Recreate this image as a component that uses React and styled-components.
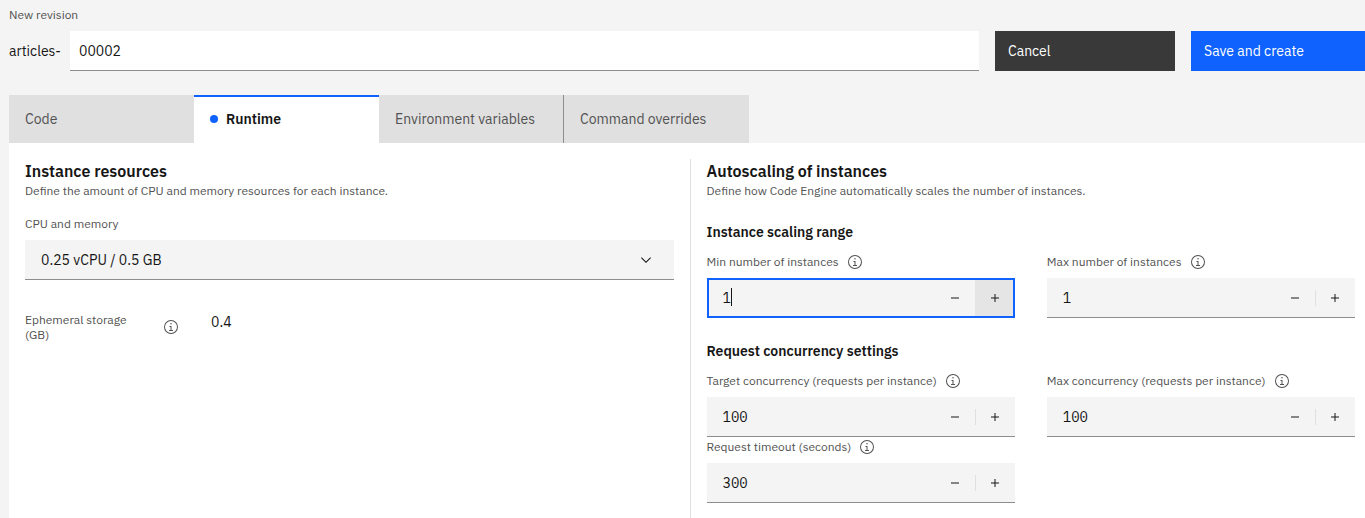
import React, { useState } from "react";
import styled, { createGlobalStyle } from "styled-components";

const sans = `"IBM Plex Sans", Inter, "Noto Sans", sans-serif`;
const mono = `"IBM Plex Mono", "Liberation Mono", monospace`;

const GlobalStyle = createGlobalStyle`
  *, *::before, *::after { box-sizing: border-box; }
  body {
    margin: 0;
    background: #f4f4f4;
    color: #161616;
    font-family: ${sans};
    font-size: 14px;
    line-height: 20px;
  }
  button, input, select { font: inherit; color: inherit; margin: 0; border: 0; border-radius: 0; }
`;

const Page = styled.main`
  display: flex;
  flex-direction: column;
  min-height: 100vh;
  padding: 7px 0 0 9px;
`;

const Header = styled.form`
  display: flex;
  flex-direction: column;
  gap: 8px;
  margin-bottom: 24px;
`;

const Label = styled.label`
  font-size: 12px;
  line-height: 16px;
  color: #525252;
`;

const HeaderRow = styled.div`
  display: flex;
  align-items: center;
  gap: 16px;
`;

const NameField = styled.div`
  flex: 1;
  display: flex;
  align-items: center;
`;

const Prefix = styled.span`
  width: 61px;
`;

const NameInput = styled.input`
  flex: 1;
  min-width: 0;
  height: 40px;
  padding: 0 9px;
  background: #fff;
  border-bottom: 1px solid #8d8d8d;
`;

const ActionButton = styled.button`
  width: ${(p) => (p.$primary ? 174 : 180)}px;
  height: 40px;
  padding: 0 13px;
  text-align: left;
  color: #fff;
  background: ${(p) => (p.$primary ? "#0f62fe" : "#393939")};
  cursor: pointer;
`;

const TabList = styled.div`
  display: flex;
`;

const Tab = styled.button`
  display: flex;
  align-items: center;
  gap: 8px;
  width: 185px;
  height: 48px;
  padding: 0 0 0 16px;
  white-space: nowrap;
  color: ${(p) => (p.$active ? "#161616" : "#525252")};
  font-weight: ${(p) => (p.$active ? 600 : 400)};
  background: ${(p) => (p.$active ? "#fff" : "#e0e0e0")};
  box-shadow: ${(p) =>
    p.$active ? "inset 0 2px 0 #0f62fe" : p.$divided ? "inset -1px 0 0 #8d8d8d" : "none"};
  cursor: pointer;
`;

const Dot = styled.span`
  width: 8px;
  height: 8px;
  border-radius: 50%;
  background: #0f62fe;
`;

const Panel = styled.section`
  flex: 1;
  display: flex;
  gap: 16px;
  padding: 16px 10px 0 16px;
  background: #fff;
`;

const Column = styled.div`
  flex: 1 1 0;
  min-width: 0;
`;

const Divider = styled.div`
  width: 1px;
  background: #e0e0e0;
`;

const Title = styled.h2`
  margin: 0;
  font-size: 16px;
  line-height: 24px;
  font-weight: 600;
`;

const Description = styled.p`
  margin: 0;
  font-size: 12px;
  line-height: 16px;
  color: #525252;
`;

const SelectField = styled.div`
  display: flex;
  flex-direction: column;
  gap: 8px;
  margin-top: 17px;
`;

const SelectBox = styled.div`
  position: relative;
  display: flex;

  svg {
    position: absolute;
    right: 20px;
    top: 12px;
    pointer-events: none;
  }
`;

const Select = styled.select`
  appearance: none;
  flex: 1;
  height: 40px;
  padding: 0 48px 0 16px;
  background: #f4f4f4;
  border-bottom: 1px solid #8d8d8d;
`;

const Storage = styled.div`
  display: flex;
  align-items: center;
  margin-top: 32px;
`;

const StorageLabel = styled.span`
  width: 138px;
  padding-right: 16px;
  font-size: 12px;
  line-height: 15px;
  color: #525252;
`;

const StorageValue = styled.output`
  align-self: flex-start;
  margin-left: 32px;
`;

const Group = styled.section`
  margin-top: 23px;
`;

const GroupTitle = styled.h3`
  margin: 0 0 12px;
  font-size: 14px;
  line-height: 20px;
  font-weight: 600;
`;

const FieldGrid = styled.div`
  display: grid;
  grid-template-columns: 1fr 1fr;
  gap: 2px 32px;
`;

const Field = styled.div`
  display: flex;
  flex-direction: column;
  gap: 8px;
`;

const LabelRow = styled.div`
  display: flex;
  align-items: center;
  gap: 8px;
  height: 16px;
  white-space: nowrap;
`;

const InfoButton = styled.button`
  display: flex;
  padding: 0;
  color: #525252;
  background: none;
  cursor: pointer;
`;

const NumberBox = styled.div`
  position: relative;
  display: flex;
  height: 40px;
  background: #f4f4f4;
  border: 0 solid #8d8d8d;
  border-bottom-width: 1px;
  ${(p) => p.$focused && "border: 2px solid #0f62fe;"}
`;

const NumberInput = styled.input`
  flex: 1;
  min-width: 0;
  padding: 0 0 0 ${(p) => (p.$focused ? 14 : 16)}px;
  background: none;
  font-family: ${mono};
  outline: none;
`;

const Caret = styled.span`
  position: absolute;
  left: 22px;
  top: 8px;
  width: 1px;
  height: 18px;
  background: #161616;
`;

const Step = styled.button`
  position: relative;
  display: flex;
  align-items: center;
  justify-content: center;
  width: 40px;
  padding: 0;
  background: none;
  cursor: pointer;
`;

const StepUp = styled(Step)`
  ${(p) =>
    p.$focused
      ? "width: 38px; padding-left: 2px; background: #e5e5e5;"
      : `&::before {
          content: "";
          position: absolute;
          left: 0;
          top: 12px;
          width: 1px;
          height: 16px;
          background: #e0e0e0;
        }`}
`;

const InfoIcon = () => (
  <svg width="16" height="16" viewBox="0 0 32 32" fill="currentColor" aria-hidden="true">
    <path d="M17 22V14H13V16H15V22H12V24H20V22zM16 8a1.5 1.5 0 1 0 1.5 1.5A1.5 1.5 0 0 0 16 8z" />
    <path d="M16 30A14 14 0 1 1 30 16 14 14 0 0 1 16 30ZM16 4A12 12 0 1 0 28 16 12 12 0 0 0 16 4Z" />
  </svg>
);

const ChevronIcon = () => (
  <svg width="16" height="16" viewBox="0 0 16 16" fill="#161616" aria-hidden="true">
    <path d="M8 11L3 6 3.7 5.3 8 9.6 12.3 5.3 13 6z" />
  </svg>
);

const MinusIcon = () => (
  <svg width="16" height="16" viewBox="0 0 32 32" fill="#161616" aria-hidden="true">
    <path d="M8 15H24V17H8z" />
  </svg>
);

const PlusIcon = () => (
  <svg width="16" height="16" viewBox="0 0 32 32" fill="#161616" aria-hidden="true">
    <path d="M17 15V8H15V15H8V17H15V24H17V17H24V15z" />
  </svg>
);

const Info = ({ about }) => (
  <InfoButton type="button" aria-label={`About ${about}`}>
    <InfoIcon />
  </InfoButton>
);

function NumberField({ id, label, initial, focused }) {
  const [value, setValue] = useState(initial);
  const step = (by) => setValue(Math.max(0, Number(value) + by));
  return (
    <Field>
      <LabelRow>
        <Label htmlFor={id}>{label}</Label>
        <Info about={label} />
      </LabelRow>
      <NumberBox $focused={focused}>
        <NumberInput
          id={id}
          inputMode="numeric"
          value={value}
          $focused={focused}
          onChange={(e) => setValue(e.target.value)}
        />
        {focused && <Caret />}
        <Step type="button" aria-label={`Decrease ${label}`} onClick={() => step(-1)}>
          <MinusIcon />
        </Step>
        <StepUp
          type="button"
          aria-label={`Increase ${label}`}
          $focused={focused}
          onClick={() => step(1)}
        >
          <PlusIcon />
        </StepUp>
      </NumberBox>
    </Field>
  );
}

const tabs = ["Code", "Runtime", "Environment variables", "Command overrides"];

export default function App() {
  const [active, setActive] = useState("Runtime");
  return (
    <>
      <GlobalStyle />
      <Page>
        <Header onSubmit={(e) => e.preventDefault()}>
          <Label htmlFor="revision">New revision</Label>
          <HeaderRow>
            <NameField>
              <Prefix>articles-</Prefix>
              <NameInput id="revision" defaultValue="00002" />
            </NameField>
            <ActionButton type="button">Cancel</ActionButton>
            <ActionButton type="submit" $primary>
              Save and create
            </ActionButton>
          </HeaderRow>
        </Header>

        <TabList role="tablist">
          {tabs.map((name, i) => (
            <Tab
              key={name}
              type="button"
              role="tab"
              aria-selected={name === active}
              $active={name === active}
              $divided={i < tabs.length - 1 && tabs[i + 1] !== active}
              onClick={() => setActive(name)}
            >
              {name === active && <Dot />}
              {name}
            </Tab>
          ))}
        </TabList>

        <Panel role="tabpanel">
          <Column>
            <Title>Instance resources</Title>
            <Description>
              Define the amount of CPU and memory resources for each instance.
            </Description>
            <SelectField>
              <Label htmlFor="cpu-memory">CPU and memory</Label>
              <SelectBox>
                <Select id="cpu-memory">
                  <option>0.25 vCPU / 0.5 GB</option>
                </Select>
                <ChevronIcon />
              </SelectBox>
            </SelectField>
            <Storage>
              <StorageLabel id="storage">Ephemeral storage (GB)</StorageLabel>
              <Info about="ephemeral storage" />
              <StorageValue aria-labelledby="storage">0.4</StorageValue>
            </Storage>
          </Column>

          <Divider />

          <Column>
            <Title>Autoscaling of instances</Title>
            <Description>
              Define how Code Engine automatically scales the number of instances.
            </Description>
            <Group>
              <GroupTitle>Instance scaling range</GroupTitle>
              <FieldGrid>
                <NumberField id="min" label="Min number of instances" initial="1" focused />
                <NumberField id="max" label="Max number of instances" initial="1" />
              </FieldGrid>
            </Group>
            <Group>
              <GroupTitle>Request concurrency settings</GroupTitle>
              <FieldGrid>
                <NumberField
                  id="target"
                  label="Target concurrency (requests per instance)"
                  initial="100"
                />
                <NumberField
                  id="max-concurrency"
                  label="Max concurrency (requests per instance)"
                  initial="100"
                />
                <NumberField id="timeout" label="Request timeout (seconds)" initial="300" />
              </FieldGrid>
            </Group>
          </Column>
        </Panel>
      </Page>
    </>
  );
}
